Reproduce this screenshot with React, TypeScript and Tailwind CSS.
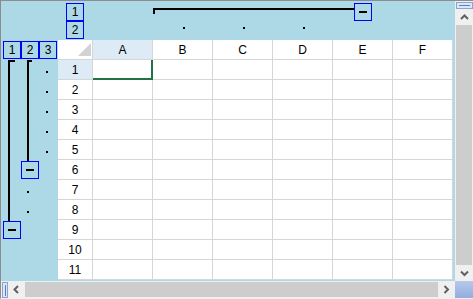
import React from "react";

const COLS = ["A", "B", "C", "D", "E", "F"];
const ROWS = [1, 2, 3, 4, 5, 6, 7, 8, 9, 10, 11];

function LevelBox({ label, className }: { label: string; className: string }) {
  return (
    <div
      className={`absolute w-[18px] h-[18px] border border-[#0000ff] flex items-center justify-center text-[12px] leading-none text-black ${className}`}
    >
      {label}
    </div>
  );
}

function MinusBox({ className }: { className: string }) {
  return (
    <div
      className={`absolute w-[18px] h-[18px] border border-[#0000ff] flex items-center justify-center ${className}`}
    >
      <div className="w-[8px] h-[2px] bg-black" />
    </div>
  );
}

function Dot({ className }: { className: string }) {
  return <div className={`absolute w-[2px] h-[2px] bg-black ${className}`} />;
}

function Chevron({ dir }: { dir: "up" | "down" | "left" | "right" }) {
  const pts = {
    up: "1,6 4.5,2.5 8,6",
    down: "1,2.5 4.5,6 8,2.5",
    left: "6,1 2.5,4.5 6,8",
    right: "2.5,1 6,4.5 2.5,8",
  }[dir];
  return (
    <svg width="9" height="9" viewBox="0 0 9 9">
      <polyline points={pts} fill="none" stroke="#606060" strokeWidth="2" />
    </svg>
  );
}

function Sheet() {
  return (
    <div className="w-[395px] flex flex-col bg-white">
      {/* header row */}
      <div className="flex h-[20px]">
        <div className="relative w-[35px] border-r border-b border-[#d6d6d6] bg-white">
          <svg className="absolute right-[1px] bottom-[3px]" width="13" height="13" viewBox="0 0 13 13">
            <polygon points="13,0 13,13 0,13" fill="#d2d2d2" />
          </svg>
        </div>
        {COLS.map((c) => (
          <div
            key={c}
            className={`w-[60px] border-r border-b border-[#d6d6d6] flex items-center justify-center ${
              c === "A" ? "bg-[#dcebf6]" : "bg-white"
            }`}
          >
            {c}
          </div>
        ))}
      </div>
      {ROWS.map((r) => (
        <div key={r} className="flex h-[20px]">
          <div
            className={`w-[35px] border-r border-b border-[#d6d6d6] flex items-center justify-center ${
              r === 1 ? "bg-[#dcebf6]" : "bg-white"
            }`}
          >
            {r}
          </div>
          {COLS.map((c) => (
            <div key={c} className="relative w-[60px] border-r border-b border-[#d6d6d6]">
              {r === 1 && c === "A" && (
                <div className="absolute top-0 left-0 -right-[1px] -bottom-[1px] border-r-2 border-b-2 border-[#217346]" />
              )}
            </div>
          ))}
        </div>
      ))}
    </div>
  );
}

function Splitter({ vertical }: { vertical: boolean }) {
  return (
    <div className="w-full h-full border border-[#8aa4d0] bg-[#dbe6f6] flex items-center justify-center">
      {vertical ? (
        <div className="w-[1px] h-[11px] bg-[#5a7dbd]" />
      ) : (
        <div className="w-[11px] h-[1px] bg-[#5a7dbd]" />
      )}
    </div>
  );
}

export default function App() {
  return (
    <div className="w-[473px] h-[299px] border-t border-l border-b border-t-[#8c8c8c] border-l-[#8c8c8c] border-b-[#f0f0f0] bg-[#add8e6] flex flex-col font-['Liberation_Sans',Arial,sans-serif] text-[12px] text-black">
      <div className="flex h-[280px]">
        <div className="w-[454px] flex flex-col">
          {/* column outline */}
          <div className="relative h-[39px]">
            <LevelBox label="1" className="left-[65px] top-[2px]" />
            <LevelBox label="2" className="left-[65px] top-[20px]" />
            <div className="absolute left-[152px] top-[7px] w-[202px] h-[2px] bg-black" />
            <div className="absolute left-[152px] top-[7px] w-[2px] h-[6px] bg-black" />
            <MinusBox className="left-[353px] top-[2px]" />
            <Dot className="left-[182px] top-[26px]" />
            <Dot className="left-[242px] top-[26px]" />
            <Dot className="left-[302px] top-[26px]" />
          </div>
          <div className="flex flex-1">
            {/* row outline */}
            <div className="relative w-[57px]">
              <LevelBox label="1" className="left-[2px] top-[1px]" />
              <LevelBox label="2" className="left-[20px] top-[1px]" />
              <LevelBox label="3" className="left-[38px] top-[1px]" />
              <div className="absolute left-[7px] top-[20px] w-[2px] h-[161px] bg-black" />
              <div className="absolute left-[7px] top-[20px] w-[7px] h-[2px] bg-black" />
              <MinusBox className="left-[2px] top-[181px]" />
              <div className="absolute left-[26px] top-[20px] w-[2px] h-[101px] bg-black" />
              <div className="absolute left-[26px] top-[20px] w-[5px] h-[2px] bg-black" />
              <MinusBox className="left-[20px] top-[121px]" />
              <Dot className="left-[45px] top-[31px]" />
              <Dot className="left-[45px] top-[51px]" />
              <Dot className="left-[45px] top-[71px]" />
              <Dot className="left-[45px] top-[91px]" />
              <Dot className="left-[45px] top-[111px]" />
              <Dot className="left-[26px] top-[151px]" />
              <Dot className="left-[26px] top-[171px]" />
            </div>
            <div className="flex flex-col">
              <Sheet />
            </div>
          </div>
        </div>
        {/* vertical scrollbar */}
        <div className="w-[18px] flex flex-col bg-[#f0f0f0]">
          <div className="h-[8px] pt-[1px] pl-[1px]">
            <Splitter vertical={false} />
          </div>
          <div className="h-[16px] flex items-center justify-center">
            <Chevron dir="up" />
          </div>
          <div className="h-[240px] px-[1px]">
            <div className="w-full h-full bg-[#cdcdcd]" />
          </div>
          <div className="h-[16px] flex items-center justify-center">
            <Chevron dir="down" />
          </div>
        </div>
      </div>
      {/* horizontal scrollbar */}
      <div className="flex h-[17px]">
        <div className="w-[454px] flex bg-[#f0f0f0]">
          <div className="w-[7px] pl-[1px] pt-[1px]">
            <Splitter vertical={true} />
          </div>
          <div className="w-[17px] flex items-center justify-center">
            <Chevron dir="left" />
          </div>
          <div className="w-[413px] py-[1px]">
            <div className="w-full h-full bg-[#cdcdcd]" />
          </div>
          <div className="w-[17px] flex items-center justify-center">
            <Chevron dir="right" />
          </div>
        </div>
        <div className="w-[18px] bg-gradient-to-b from-[#b7c9ea] to-[#92addf]" />
      </div>
    </div>
  );
}
